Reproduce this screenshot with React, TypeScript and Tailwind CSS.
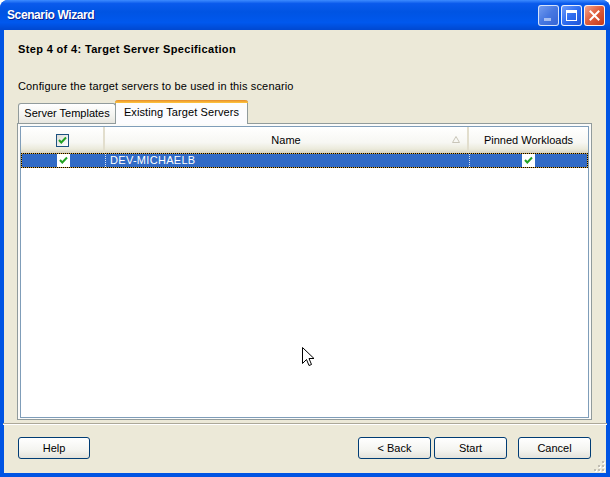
import React from 'react'

const font = { fontFamily: '"Liberation Sans", Arial, sans-serif' }

function Check({ header = false }: { header?: boolean }) {
  return (
    <div
      className={`w-[13px] h-[13px] flex items-center justify-center border ${
        header ? 'border-[#1C5180] bg-[linear-gradient(135deg,#dcdcd7,#ffffff)]' : 'border-white bg-white'
      }`}
    >
      <svg width="9" height="9" viewBox="0 0 9 9">
        <path d="M1 4 L3.3 6.5 L8 1.5" fill="none" stroke="#21A121" strokeWidth="2" />
      </svg>
    </div>
  )
}

function TitleButton({ kind }: { kind: 'min' | 'max' | 'close' }) {
  const bg =
    kind === 'close'
      ? 'bg-[linear-gradient(135deg,#F2A58E,#E0603F_45%,#C4391A)]'
      : kind === 'min'
      ? 'bg-[linear-gradient(135deg,#7FA4F0,#4F7CE0_50%,#3C68D4)] opacity-90'
      : 'bg-[linear-gradient(135deg,#6E9CFA,#2F6DF0_50%,#1F55D8)]'
  return (
    <div className={`w-[21px] h-[21px] rounded-[3px] border border-white/90 ${bg} flex items-center justify-center`}>
      {kind === 'min' && <div className="w-[7px] h-[3px] bg-white/60 mt-[8px] -ml-[3px]" />}
      {kind === 'max' && <div className="w-[11px] h-[11px] border border-white border-t-[3px]" />}
      {kind === 'close' && (
        <svg width="11" height="11" viewBox="0 0 11 11">
          <path d="M1.5 1.5 L9.5 9.5 M9.5 1.5 L1.5 9.5" stroke="white" strokeWidth="2" strokeLinecap="square" />
        </svg>
      )}
    </div>
  )
}

function Button({ label, className = '' }: { label: string; className?: string }) {
  return (
    <div
      className={`h-[22px] rounded-[3px] border border-[#003C74] bg-[linear-gradient(180deg,#ffffff,#f4f4f0_60%,#e3e2da)] flex items-center justify-center text-[11px] text-black ${className}`}
    >
      {label}
    </div>
  )
}

export default function App() {
  return (
    <div className="relative w-[610px] h-[477px] bg-white" style={font}>
      <div className="w-full h-full flex flex-col rounded-t-[8px] bg-[#0054E3] overflow-hidden">
        {/* title bar */}
        <div className="h-[30px] shrink-0 flex items-center pl-[7px] pr-[5px] bg-[linear-gradient(180deg,#3D8BFF_0%,#0A5AEC_12%,#0054E3_40%,#0058EE_75%,#0048D0_100%)]">
          <span className="flex-1 text-white font-bold text-[12px] tracking-[-0.4px] [text-shadow:1px_1px_0_#0A1E8C]">
            Scenario Wizard
          </span>
          <div className="flex gap-[2px] pt-px">
            <TitleButton kind="min" />
            <TitleButton kind="max" />
            <TitleButton kind="close" />
          </div>
        </div>

        {/* client */}
        <div className="relative flex-1 mx-[4px] mb-[4px] bg-[#ECE9D8] flex flex-col">
          <div className="pt-[12px] pl-[14px] h-[26px] leading-[14px] text-[11px] font-bold text-black tracking-[0.35px]">
            Step 4 of 4: Target Server Specification
          </div>
          <div className="mt-[23px] pl-[14px] h-[14px] leading-[14px] text-[11px] text-black tracking-[0.15px]">
            Configure the target servers to be used in this scenario
          </div>

          {/* tabs */}
          <div className="mt-[7px] h-[23px] flex items-end pl-[14px]">
            <div className="h-[20px] w-[98px] rounded-t-[3px] border border-b-0 border-[#919B9C] bg-[linear-gradient(180deg,#ffffff,#f3f3ef_60%,#e8e7e0)] flex items-center justify-center text-[11px] text-black">
              Server Templates
            </div>
            <div className="relative z-10 -ml-px -mb-px h-[24px] w-[133px] rounded-t-[3px] border-x border-[#919B9C] bg-[#FCFCFE] flex flex-col">
              <div className="h-[3px] -mx-px rounded-t-[3px] bg-[linear-gradient(180deg,#E68B2C,#FFC73C)]" />
              <div className="flex-1 flex items-center justify-center text-[11px] text-black pb-[2px] tracking-[0.1px]">
                Existing Target Servers
              </div>
            </div>
          </div>

          {/* panel */}
          <div className="ml-[13px] mr-[14px] h-[297px] border border-[#919B9C] bg-[#FBFBF9] p-[2px] pb-px">
            <div className="h-full border border-[#7F9DB9] bg-white flex flex-col">
              <div className="h-[26px] flex bg-[linear-gradient(180deg,#ffffff,#f7f7f3_60%,#ebeadb_85%,#d6d2c2)] text-[11px] text-black">
                <div className="w-[84px] flex items-center justify-center border-r-2 border-[#E2DECD]">
                  <Check header />
                </div>
                <div className="w-[364px] relative flex items-center justify-center border-r-2 border-[#E2DECD]">
                  Name
                  <svg className="absolute right-[7px] top-[9px]" width="8" height="7" viewBox="0 0 8 7">
                    <path d="M4 0.5 L7.5 6.5 L0.5 6.5 Z" fill="none" stroke="#C8C5B8" strokeWidth="1" />
                  </svg>
                </div>
                <div className="flex-1 flex items-center justify-center">Pinned Workloads</div>
              </div>
              <div className="h-[15px] border border-dotted border-black bg-[#D8A640]">
                <div className="h-full flex bg-[#316AC5] text-[11px] text-white">
                  <div className="w-[83px] flex items-center justify-center">
                    <Check />
                  </div>
                  <div className="w-[364px] flex items-center pl-[4px] border-l border-dotted border-white/80 tracking-[0.3px]">
                    DEV-MICHAELB
                  </div>
                  <div className="flex-1 flex items-center justify-center border-l border-dotted border-white/80 pr-px">
                    <Check />
                  </div>
                </div>
              </div>
            </div>
          </div>

          {/* separator */}
          <div className="mt-[3px] h-[2px] border-t border-[#ACA899] border-b border-b-white mx-[-1px]" />

          {/* buttons */}
          <div className="mt-[12px] flex pl-[14px] pr-[15px]">
            <Button label="Help" className="w-[72px]" />
            <div className="flex-1" />
            <Button label="< Back" className="w-[73px]" />
            <Button label="Start" className="w-[73px] ml-[3px]" />
            <Button label="Cancel" className="w-[73px] ml-[11px]" />
          </div>

          {/* resize grip */}
          <svg className="absolute right-[1px] bottom-[1px]" width="11" height="11" viewBox="0 0 11 11">
            {[
              [8, 0],
              [4, 4],
              [8, 4],
              [0, 8],
              [4, 8],
              [8, 8],
            ].map(([x, y], i) => (
              <g key={i}>
                <rect x={x + 1} y={y + 1} width="2" height="2" fill="white" />
                <rect x={x} y={y} width="2" height="2" fill="#C1BEB3" />
              </g>
            ))}
          </svg>
        </div>
      </div>

      {/* mouse cursor */}
      <svg className="absolute left-[302px] top-[347px]" width="13" height="21" viewBox="0 0 13 21">
        <path
          d="M0.5 0.5 L0.5 16.5 L4.5 12.5 L7 18.5 L9.5 17.5 L7 11.5 L12 11.5 Z"
          fill="white"
          stroke="black"
          strokeWidth="1"
          strokeLinejoin="miter"
        />
      </svg>
    </div>
  )
}
